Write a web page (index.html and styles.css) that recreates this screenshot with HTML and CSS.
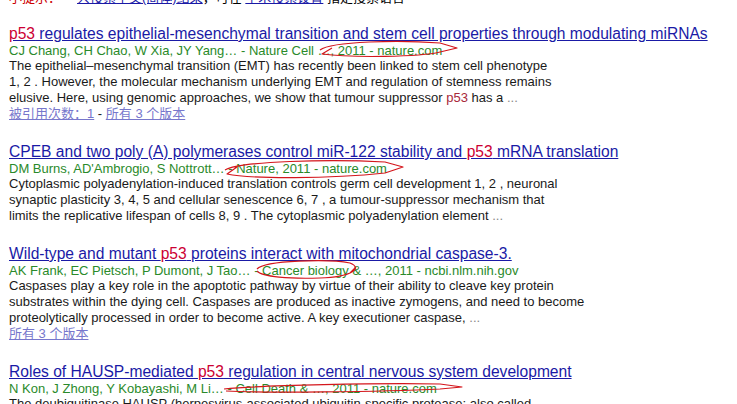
FILE: index.html
```html
<!DOCTYPE html>
<html lang="zh-CN">
<head>
    <meta charset="UTF-8">
    <title>学术搜索 - p53</title>
    <link rel="stylesheet" href="styles.css">
</head>
<body>
    <div class="page">
        <div class="tip">
            <span class="tip-label">小提示：</span><a href="#">只搜索<b>中文(简体)</b>结果</a>，可在 <a href="#">学术搜索设置</a> 指定搜索语言
        </div>

        <div class="result">
            <h3 class="title"><a href="#"><em>p53</em> regulates epithelial-mesenchymal transition and stem cell properties through modulating miRNAs</a></h3>
            <div class="authors">CJ Chang, CH Chao, W Xia, JY Yang… - Nature Cell …, 2011 - nature.com</div>
            <div class="snippet">The epithelial–mesenchymal transition (EMT) has recently been linked to stem cell phenotype<br>1, 2 . However, the molecular mechanism underlying EMT and regulation of stemness remains<br>elusive. Here, using genomic approaches, we show that tumour suppressor <em>p53</em> has a <span class="more">...</span></div>
            <div class="links"><a href="#">被引用次数：1</a> - <a href="#">所有 3 个版本</a></div>
        </div>

        <div class="result">
            <h3 class="title"><a href="#">CPEB and two poly (A) polymerases control miR-122 stability and <em>p53</em> mRNA translation</a></h3>
            <div class="authors">DM Burns, AD'Ambrogio, S Nottrott… - Nature, 2011 - nature.com</div>
            <div class="snippet">Cytoplasmic polyadenylation-induced translation controls germ cell development 1, 2 , neuronal<br>synaptic plasticity 3, 4, 5 and cellular senescence 6, 7 , a tumour-suppressor mechanism that<br>limits the replicative lifespan of cells 8, 9 . The cytoplasmic polyadenylation element <span class="more">...</span></div>
        </div>

        <div class="result">
            <h3 class="title"><a href="#">Wild-type and mutant <em>p53</em> proteins interact with mitochondrial caspase-3.</a></h3>
            <div class="authors">AK Frank, EC Pietsch, P Dumont, J Tao… - Cancer biology &amp; …, 2011 - ncbi.nlm.nih.gov</div>
            <div class="snippet">Caspases play a key role in the apoptotic pathway by virtue of their ability to cleave key protein<br>substrates within the dying cell. Caspases are produced as inactive zymogens, and need to become<br>proteolytically processed in order to become active. A key executioner caspase, <span class="more">...</span></div>
            <div class="links"><a href="#">所有 3 个版本</a></div>
        </div>

        <div class="result">
            <h3 class="title"><a href="#">Roles of HAUSP-mediated <em>p53</em> regulation in central nervous system development</a></h3>
            <div class="authors">N Kon, J Zhong, Y Kobayashi, M Li… - Cell Death &amp; …, 2011 - nature.com</div>
            <div class="snippet">The deubiquitinase HAUSP (herpesvirus-associated ubiquitin-specific protease; also called</div>
        </div>
    </div>

    <!-- hand-drawn red marks over the journal names -->
    <svg class="marks" width="737" height="404" viewBox="0 0 737 404">
        <g fill="none" stroke="#d4161c" stroke-width="1.2" stroke-linejoin="round">
            <path d="M320,50 C332,41 400,40 440,43 L457,48 L440,52 C420,57 352,58 322,54 L332,48"/>
            <path d="M225,170 C240,161 330,159 385,162 L403,167 L385,173 C330,179 250,179 227,174 L237,167"/>
            <path d="M257,269 C265,260 330,259 350,263 C363,268 352,277 320,278 C290,279 262,277 257,271 M350,273 L356,267"/>
            <path d="M224,389 C262,385 380,383 440,384 L462,387 L440,389 C380,392 262,393 226,391"/>
        </g>
    </svg>
</body>
</html>
```

FILE: styles.css
```css
body {
    margin: 0;
    background: #fff;
    font-family: "Liberation Sans", Arial, "Noto Sans CJK SC", sans-serif;
    color: #222;
}
.page {
    padding: 0 9px;
    white-space: nowrap;
}
a {
    color: #1a1aa6;
}
.tip {
    margin-top: -10px;
    margin-bottom: 18px;
    font-size: 13px;
    line-height: 16px;
    color: #000;
}
.tip-label {
    color: #cc0000;
    margin-right: 16px;
}
.tip b {
    font-weight: normal;
}
.result {
    margin-bottom: 20px;
}
.title {
    margin: 0;
    font-size: 15.6px;
    font-weight: normal;
    line-height: 19px;
}
.title em {
    font-style: normal;
    color: #cc0033;
}
.authors {
    font-size: 13px;
    line-height: 15px;
    color: #2a8a2a;
}
.snippet {
    font-size: 13px;
    line-height: 16px;
    color: #1a1a1a;
}
.snippet em {
    font-style: normal;
    color: #a8283a;
}
.more {
    color: #888;
}
.links {
    font-size: 13px;
    line-height: 16px;
    color: #222;
}
.links a {
    color: #7777cc;
}
.marks {
    position: absolute;
    top: 0;
    left: 0;
    pointer-events: none;
}
```
